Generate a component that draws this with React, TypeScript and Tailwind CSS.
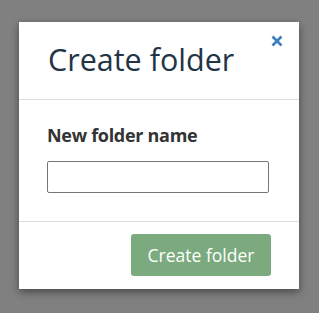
import React from 'react';

const App: React.FC = () => {
  return (
    <div className="w-[319px] h-[313px] bg-[#808080] pt-[22px] pl-[19px]" style={{ fontFamily: '"Open Sans", sans-serif' }}>
      <div className="w-[280px] h-[267px] bg-white shadow-[0_3px_8px_rgba(0,0,0,0.45)] flex flex-col">
        <header className="relative h-[78px] border-b border-[#dddddd] pl-[29px] pt-[19px]">
          <h2 className="text-[30.5px] leading-[37px] font-medium text-[#233445]">Create folder</h2>
          <button className="absolute right-[16px] top-[13px] text-[#3a7ebf]">
            <svg width="12" height="12" viewBox="0 0 12 12">
              <path d="M1.5 1.5 L10.5 10.5 M10.5 1.5 L1.5 10.5" stroke="currentColor" strokeWidth="2.6" strokeLinecap="butt" />
            </svg>
          </button>
        </header>
        <div className="h-[122px] border-b border-[#dddddd] px-[28px] pt-[23px]">
          <label className="block text-[18px] leading-[24px] font-bold tracking-[-0.3px] text-[#333333]">New folder name</label>
          <input type="text" className="mt-[14px] w-[222px] h-[32px] border border-[#767676] rounded-[2px] outline-none" />
        </div>
        <div className="flex justify-end pr-[28px] pt-[12px]">
          <button className="w-[140px] h-[42px] rounded-[3px] bg-[#7aaa7e] text-white text-[17.5px]">Create folder</button>
        </div>
      </div>
    </div>
  );
};

export default App;
